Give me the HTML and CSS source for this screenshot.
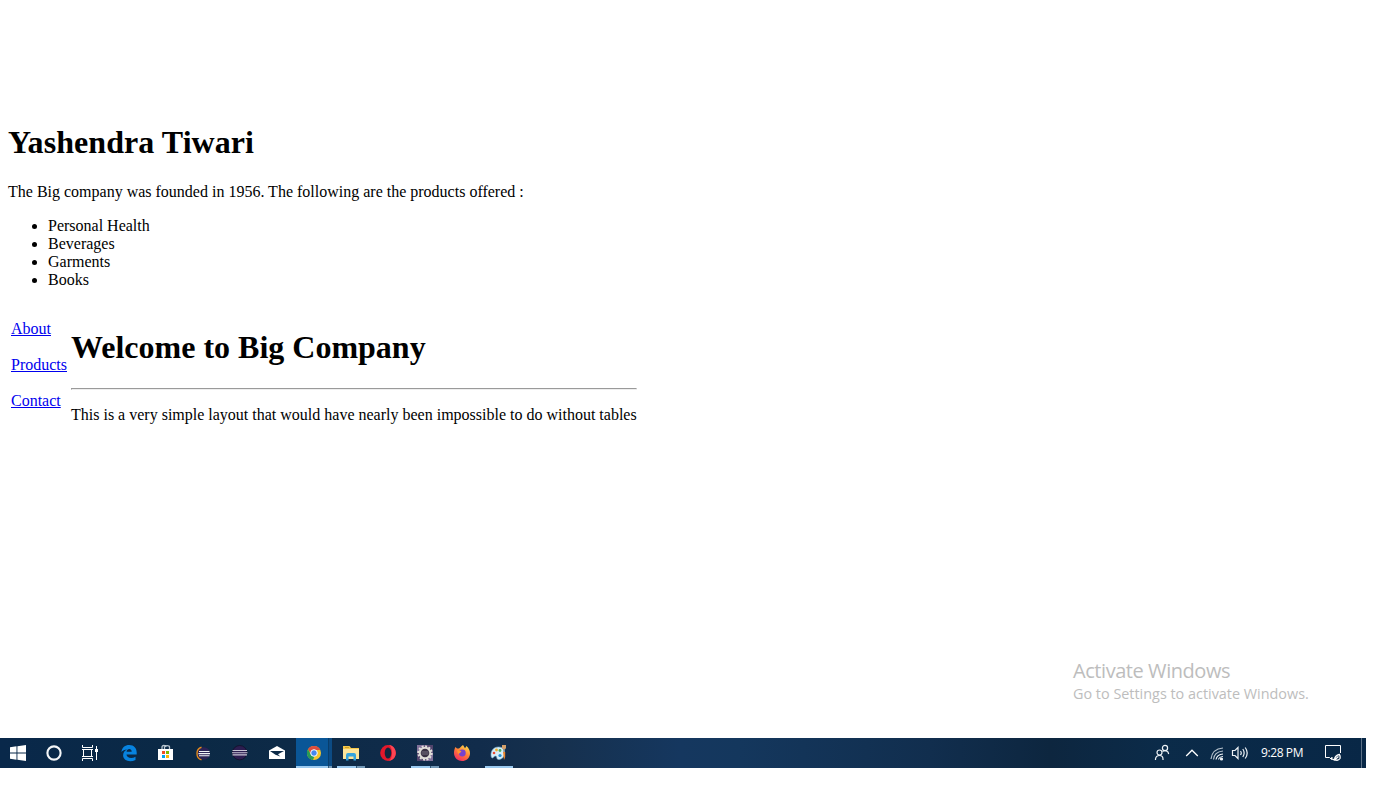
FILE: index.html
```html
<!DOCTYPE html>
<html lang="en">
<head>
<meta charset="utf-8">
<title>Big Company</title>
<link rel="stylesheet" href="styles.css">
</head>
<body>
<div class="screen">
  <main class="page">
    <h1 class="name">Yashendra Tiwari</h1>
    <p class="intro">The Big company was founded in 1956. The following are the products offered :</p>
    <ul class="products"><li>Personal Health</li><li>Beverages</li><li>Garments</li><li>Books</li></ul>
    <div class="layout">
      <nav class="links"><a href="#">About</a><a href="#">Products</a><a href="#">Contact</a></nav>
      <section class="welcome">
        <h1 class="title">Welcome to Big Company</h1>
        <hr>
        <p class="note">This is a very simple layout that would have nearly been impossible to do without tables</p>
      </section>
    </div>
  </main>
  <aside class="watermark"><div class="wm-title">Activate Windows</div><div class="wm-text">Go to Settings to activate Windows.</div></aside>
  <footer class="taskbar">
    <div class="system">
      <span class="sys"><svg width="18" height="18" viewBox="0 0 18 18"><path fill="#fff" d="M1 3.3 7.5 2.3V8.4H1zM8.4 2.2 17 1V8.4H8.4zM1 9.4H7.5V15.7L1 14.7zM8.4 9.4H17V17L8.4 15.8z"/></svg></span>
      <span class="sys"><svg width="18" height="18" viewBox="0 0 18 18"><circle cx="9" cy="9" r="6.6" fill="none" stroke="#f4f6f8" stroke-width="2.1"/></svg></span>
      <span class="sys"><svg width="18" height="18" viewBox="0 0 18 18"><path fill="none" stroke="#fff" d="M1.500 1V3.500H11.500V1M1.500 17V14.500H11.500V17M1 5.500H12M1 12.500H12M2.500 5.500V12.500M10.500 5.500V12.500M15.500 2V16"/><path fill="#fff" d="M14 5h3v3h-3z"/></svg></span>
    </div>
    <div class="apps">
      <span class="app"><svg width="18" height="18" viewBox="0 0 18 18"><path fill="#0783e0" d="M1.400 8C2 3.500 5 1 9.300 1C14 1 16.700 4.200 16.700 8.500V10.500H6.500C6.700 14.200 12 15 15.500 12.700V16C10 18.700 3.200 17 3.100 11.300C3.100 8.500 4.700 6.700 7 5.500C4.500 5.800 2.700 6.600 1.400 8zM6.600 7.700H11.700C11.700 3.800 6.800 4.100 6.600 7.700z"/></svg></span>
      <span class="app"><svg width="18" height="18" viewBox="0 0 18 18"><path fill="none" stroke="#b8c5d0" stroke-width="1.300" d="M5 6V3Q5 1.500 6.800 1.500Q9 1.500 9 3M7.500 5V3Q8 1.700 10 1.700Q12.500 1.700 12.500 3V6"/><path fill="#fff" d="M1 5H16V16H1z"/><path fill="#f25022" d="M5 7h3v3H5z"/><path fill="#7fba00" d="M9 7h3v3H9z"/><path fill="#00a4ef" d="M5 11h3v3H5z"/><path fill="#ffb900" d="M9 11h3v3H9z"/></svg></span>
      <span class="app"><svg width="18" height="18" viewBox="0 0 18 18"><circle cx="9.800" cy="9.500" r="6.200" fill="#2c2255"/><path fill="none" stroke="#e58a1d" stroke-width="1.400" d="M7.500 3.200C1.500 4.800 1.500 14.200 7.500 15.900"/><path stroke="#f2f2f7" stroke-width="1.100" d="M5 7.500H15.500M4.500 9.600H16M5 11.700H15.500"/></svg></span>
      <span class="app"><svg width="18" height="18" viewBox="0 0 18 18"><circle cx="8.700" cy="8.700" r="7.200" fill="#2c1d50" stroke="#13142e"/><path stroke="#c8c4d3" stroke-width="1.100" d="M1.500 6.500H16M1 8.700H16.500M1.500 10.900H16"/></svg></span>
      <span class="app"><svg width="18" height="18" viewBox="0 0 18 18"><path fill="#fff" d="M1 6.500 9 2l8 4.500V15H1z"/><path fill="#0c2a48" d="M2 7H16L10 10.200 12.300 12.400 7.500 10.700z"/></svg></span>
      <span class="app active"><svg width="18" height="18" viewBox="0 0 18 18"><circle cx="9" cy="9" r="7" fill="#f5c52c"/><path fill="#dc4d3f" d="M3 5.300A7 7 0 0 1 15.300 6H9L6 10z"/><path fill="#289b57" d="M3 5.300 6.200 11 9.500 12.300 8 16A7 7 0 0 1 3 5.300z"/><circle cx="9" cy="9" r="3.300" fill="#4688ee" stroke="#fff"/></svg></span>
      <span class="app open stacked"><svg width="18" height="18" viewBox="0 0 18 18"><path fill="#f5c84b" d="M1 2H7.500L9 4H17V15H1z"/><path fill="#fde59a" d="M1 5H17V15H1z"/><path stroke="#ce9e24" d="M3 3.500h4"/><path fill="#35a4dd" d="M4 16.500V11Q4 9 6 9H12Q14 9 14 11V16.500H11.500V12.500H6.500V16.500z"/></svg></span>
      <span class="app"><svg width="18" height="18" viewBox="0 0 18 18"><ellipse cx="9" cy="9" rx="7.800" ry="7.900" fill="#e3182b"/><path fill="#ff4553" d="M10 1.100C14 1.500 16.800 5 16.800 9S14 16.500 10 16.900C14 14.500 14 3.500 10 1.100z"/><ellipse cx="9" cy="9" rx="3.300" ry="5.600" fill="#10263f"/></svg></span>
      <span class="app open stacked"><svg width="18" height="18" viewBox="0 0 18 18"><path fill="#51446c" d="M1 1H17V17H1z"/><path fill="#80719a" d="M1 9 9 1H1zM17 8V17H9z"/><circle cx="9" cy="9" r="6.700" fill="none" stroke="#e3e1dc" stroke-width="2" stroke-dasharray="2 1.500"/><circle cx="9" cy="9" r="5.300" fill="#383043" stroke="#dfddd8" stroke-width="2"/><path stroke="#777080" d="M5.500 8h7M5.500 10h7"/></svg></span>
      <span class="app"><svg width="18" height="18" viewBox="0 0 18 18"><defs><linearGradient id="fire" x1=".8" y1="0" x2=".2" y2="1"><stop stop-color="#ffe24a"/><stop offset=".5" stop-color="#ff7838"/><stop offset="1" stop-color="#f12567"/></linearGradient></defs><path fill="url(#fire)" d="M2.500 3 4 4.500 6 4.600C8 3 8.500 2 10 1L12 4.200 13.500 2C16 4 17.200 7 17 10C16.500 14.500 13 17 9 17S1 14 1 9C1 6.500 1.500 4.500 2.500 3z"/><circle cx="9.300" cy="9" r="3.400" fill="#7542cf"/><path fill="#ff952e" d="M4 6 8.500 7 7 9 5 10z"/></svg></span>
      <span class="app open"><svg width="18" height="18" viewBox="0 0 18 18"><path fill="#d6eef8" stroke="#78b6d3" stroke-width=".6" d="M1 11C1 6 4 3 8.500 3S15 6 14.500 10C14 13 12 15.500 8.500 15.500C6 15.500 7.500 12 5.500 12S3.500 14.500 2 14Q1 13 1 11z"/><circle cx="4" cy="9" r="1.300" fill="#e94b35"/><circle cx="6.500" cy="6" r="1.400" fill="#f0ad2b"/><circle cx="10" cy="6.500" r="1.400" fill="#4bac57"/><circle cx="10" cy="11.500" r="1.600" fill="#268ed1"/><path fill="#d5a16a" d="M12 1h4v3l-1 1.500h-2L12 4z"/><path stroke="#8d969a" stroke-width="1.500" d="M14 5V9"/><path fill="#f0872b" d="M13 8h2.200V13L14 16z"/></svg></span>
    </div>
    <div class="tray">
      <svg class="people" width="18" height="18" viewBox="0 0 18 18" fill="none" stroke="#eef3f7" stroke-width="1.200"><circle cx="6.500" cy="8.500" r="2.500"/><path d="M2.500 16V15Q3 11.500 6.500 11.500T10 15V16"/><circle cx="12" cy="4" r="2.600"/><path d="M9.500 7.500Q12 5.500 15 8L15.700 10"/></svg>
      <svg class="chevron" width="14" height="18" viewBox="0 0 14 18" fill="none" stroke="#fff" stroke-width="1.300"><path d="M1.200 12 7 6.200 12.800 12"/></svg>
      <svg class="wifi" width="14" height="18" viewBox="0 0 14 18" fill="none" stroke="#eef3f7" stroke-width="1.200"><path stroke="#b5c1cc" d="M1 15Q2 5 13 4M3.500 15.500Q4 8 13 7"/><path d="M6 15.500Q7 10.500 13 10M8.500 15.500Q9 13 13 12.500"/><circle cx="11.500" cy="15" r="1" fill="#fff"/></svg>
      <svg class="sound" width="18" height="18" viewBox="0 0 18 18" fill="none" stroke="#eef3f7" stroke-width="1.200"><path d="M1.500 6.500H4L7 3.500V14.500L4 11.500H1.500zM9.500 7Q11 9 9.500 11M11.800 5Q14.500 9 11.800 13M14.200 3.500Q18.200 9 14.200 14.500"/></svg>
      <span class="clock">9:28 PM</span>
      <svg class="notice" width="18" height="18" viewBox="0 0 18 18" fill="none" stroke="#fff"><path d="M8.500 13.500H7.500V15.500L5.500 13.500H1.500V1.500H16.500V9"/><path stroke-width="1.300" d="M15.300 10.500Q11 11.500 10.500 15.500Q14 17.500 16 14.500Q16.500 12 15.300 10.500zM8 14.800 10.500 16 14.500 12.500"/></svg>
      <span class="desktop-edge"></span>
    </div>
  </footer>
</div>
</body>
</html>
```
FILE: styles.css
```css
body { margin: 0; background: #fff; color: #000; font-family: "Liberation Serif", "Times New Roman", serif; font-size: 16px; line-height: 18px; }
.screen { width: 1366px; height: 768px; display: flex; flex-direction: column; }
.page { flex: 1; padding: 124px 8px 0; white-space: nowrap; }
h1 { margin: 0 0 22px; font-size: 32px; line-height: 37px; font-weight: bold; }
p { margin: 0; }
.name { letter-spacing: 0.06px; }
.products { margin: 16px 0 31px; padding-left: 40px; }
.layout { display: flex; gap: 4px; padding-left: 3px; }
.links { display: flex; flex-direction: column; align-items: flex-start; gap: 18px; width: 56px; }
.links a { color: #0000ee; text-decoration: underline; }
.welcome { padding-top: 9px; width: 566px; }
hr { margin: 0 0 16px; border: 1px solid; border-color: #9a9a9a #eee #eee #9a9a9a; height: 0; }
.watermark { align-self: flex-end; width: 293px; height: 80px; color: #bdbdbd; font-family: "Open Sans", "Noto Sans", sans-serif; white-space: nowrap; }
.wm-title { font-size: 20px; line-height: 26px; letter-spacing: -0.44px; }
.wm-text { font-size: 14.4px; line-height: 20px; }
.taskbar { display: flex; justify-content: space-between; height: 30px; background: linear-gradient(90deg, #09284a 0, #0b2945 190px, #112c4b 480px, #16304d 550px, #15375f 680px, #14375d 740px, #112e4e 930px, #0d263f 1050px, #0b2b49 1160px, #082746 1366px); }
.system, .apps, .tray { display: flex; align-items: stretch; }
.system { width: 111px; }
.sys { width: 36px; display: flex; align-items: center; justify-content: center; }
.apps { flex: 1; }
.app { width: 37px; padding-right: 1px; box-sizing: border-box; display: flex; align-items: center; justify-content: center; }
.app:first-child { padding-right: 2px; }
.open { background: linear-gradient(#9bcaf0, #9bcaf0) 4px 28px / 28px 2px no-repeat; }
.open.stacked { background-image: linear-gradient(90deg, #9bcaf0 0 19px, #315777 19px 20px, #7298b7 20px); }
.active { background: linear-gradient(90deg, #9bcaf0 0 32px, #315777 32px 33px, #7298b7 33px) 0 28px / 36px 2px no-repeat, linear-gradient(90deg, #0a5697 0 32px, #093e6c 32px 33px, #0c4b84 33px) 0 0 / 36px 30px no-repeat; }
.tray { align-items: center; color: #fff; font: 12px/18px "Open Sans", "Noto Sans", sans-serif; }
.chevron { margin-left: 14px; }
.wifi { margin-left: 11px; }
.sound { margin-left: 7px; }
.clock { width: 43px; margin-left: 12px; white-space: nowrap; letter-spacing: -0.4px; }
.notice { margin-left: 20px; }
.desktop-edge { align-self: stretch; width: 4px; margin-left: 19px; border-left: 1px solid #5c7187; }
```
